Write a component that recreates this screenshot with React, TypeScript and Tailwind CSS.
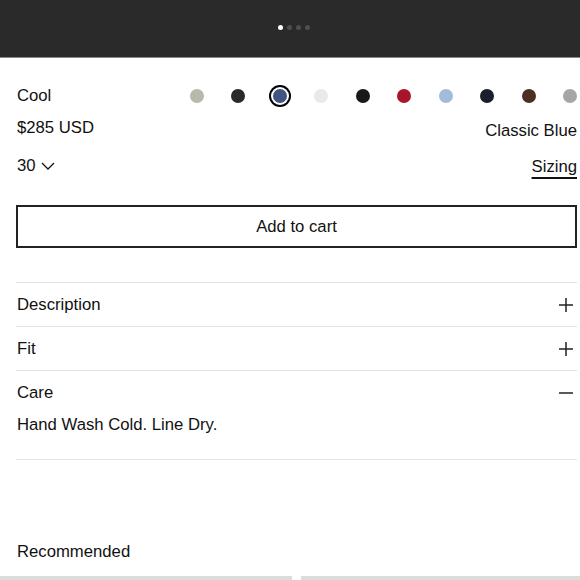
import { useState } from "react";

const swatches = [
  { name: "Stone", color: "#b8b8ac" },
  { name: "Charcoal", color: "#2a2a2a" },
  { name: "Classic Blue", color: "#3e5681" },
  { name: "White", color: "#e9e9e9" },
  { name: "Black", color: "#181818" },
  { name: "Red", color: "#a8142a" },
  { name: "Light Blue", color: "#a2bbd9" },
  { name: "Navy", color: "#1b1e2d" },
  { name: "Brown", color: "#4b2f22" },
  { name: "Grey", color: "#a6a6a6" },
];

function Plus() {
  return (
    <svg width="16" height="16" viewBox="0 0 16 16" className="text-[#222]">
      <path d="M8 1v14M1 8h14" stroke="currentColor" strokeWidth="1.5" />
    </svg>
  );
}

function Minus() {
  return (
    <svg width="16" height="16" viewBox="0 0 16 16" className="text-[#222]">
      <path d="M1 8h14" stroke="currentColor" strokeWidth="1.5" />
    </svg>
  );
}

export default function App() {
  const [selected, setSelected] = useState(2);
  const [open, setOpen] = useState("Care");

  const sections = [
    { title: "Description", body: "Classic straight fit in rigid denim." },
    { title: "Fit", body: "True to size." },
    { title: "Care", body: "Hand Wash Cold. Line Dry." },
  ];

  return (
    <div className="w-[580px] h-[580px] overflow-hidden bg-white text-[#111] font-['Liberation_Sans',Arial,sans-serif] text-[16.7px] leading-[20px]">
      {/* Gallery strip */}
      <div className="h-[58px] bg-[#2a2a2a] border-b border-[#8a8a8a] flex justify-center pt-[25px]">
        <div className="flex gap-[4px] h-[5px] ml-[7px]">
          <span className="w-[5px] h-[5px] rounded-full bg-white" />
          <span className="w-[5px] h-[5px] rounded-full bg-[#4e4e4e]" />
          <span className="w-[5px] h-[5px] rounded-full bg-[#4e4e4e]" />
          <span className="w-[5px] h-[5px] rounded-full bg-[#4e4e4e]" />
        </div>
      </div>

      <div className="pl-[16px] pr-[3px]">
        {/* Colour row */}
        <div className="flex items-center justify-between mt-[28px] h-[20px]">
          <span className="pl-[1px]">Cool</span>
          <div className="flex items-center gap-[27.5px]">
            {swatches.map((s, i) => (
              <button
                key={s.name}
                aria-label={s.name}
                onClick={() => setSelected(i)}
                className={
                  i === selected
                    ? "w-[14px] h-[14px] rounded-full ring-2 ring-black ring-offset-2 ring-offset-white"
                    : "w-[14px] h-[14px] rounded-full"
                }
                style={{ backgroundColor: s.color }}
              />
            ))}
          </div>
        </div>

        {/* Price + colour name */}
        <div className="flex justify-between mt-[12px]">
          <span className="pl-[1px]">$285 USD</span>
          <span className="mt-[3px]">{swatches[selected].name}</span>
        </div>

        {/* Size + sizing */}
        <div className="flex justify-between items-center mt-[14px]">
          <button className="flex items-center gap-[5px] pl-[1px]">
            <span>30</span>
            <svg width="14" height="8" viewBox="0 0 14 8">
              <path d="M1 1l6 6 6-6" fill="none" stroke="#111" strokeWidth="1.3" />
            </svg>
          </button>
          <a href="#" className="underline underline-offset-[5px] decoration-[1.5px] mt-[2px]">
            Sizing
          </a>
        </div>

        {/* Add to cart */}
        <button className="mt-[28px] w-full h-[43px] border-2 border-[#222] text-center">
          Add to cart
        </button>

        {/* Accordion */}
        <div className="mt-[34px]">
          {sections.map((s) => (
            <div key={s.title} className="border-t border-[#e3e3e3]">
              <button
                onClick={() => setOpen(open === s.title ? "" : s.title)}
                className="w-full h-[43px] flex items-center justify-between pl-[1px] pr-[3px]"
              >
                <span>{s.title}</span>
                {open === s.title ? <Minus /> : <Plus />}
              </button>
              {open === s.title && (
                <p className="pl-[1px] pt-[1px] pb-[24px]">{s.body}</p>
              )}
            </div>
          ))}
          <div className="border-t border-[#e3e3e3]" />
        </div>

        <h3 className="mt-[82px] pl-[1px]">Recommended</h3>
      </div>

      {/* Recommended cards (top edges) */}
      <div className="mt-[14px] flex gap-[9px]">
        <div className="w-[292px] h-[20px] bg-[#dcdcdc]" />
        <div className="flex-1 h-[20px] bg-[#dcdcdc]" />
      </div>
    </div>
  );
}
